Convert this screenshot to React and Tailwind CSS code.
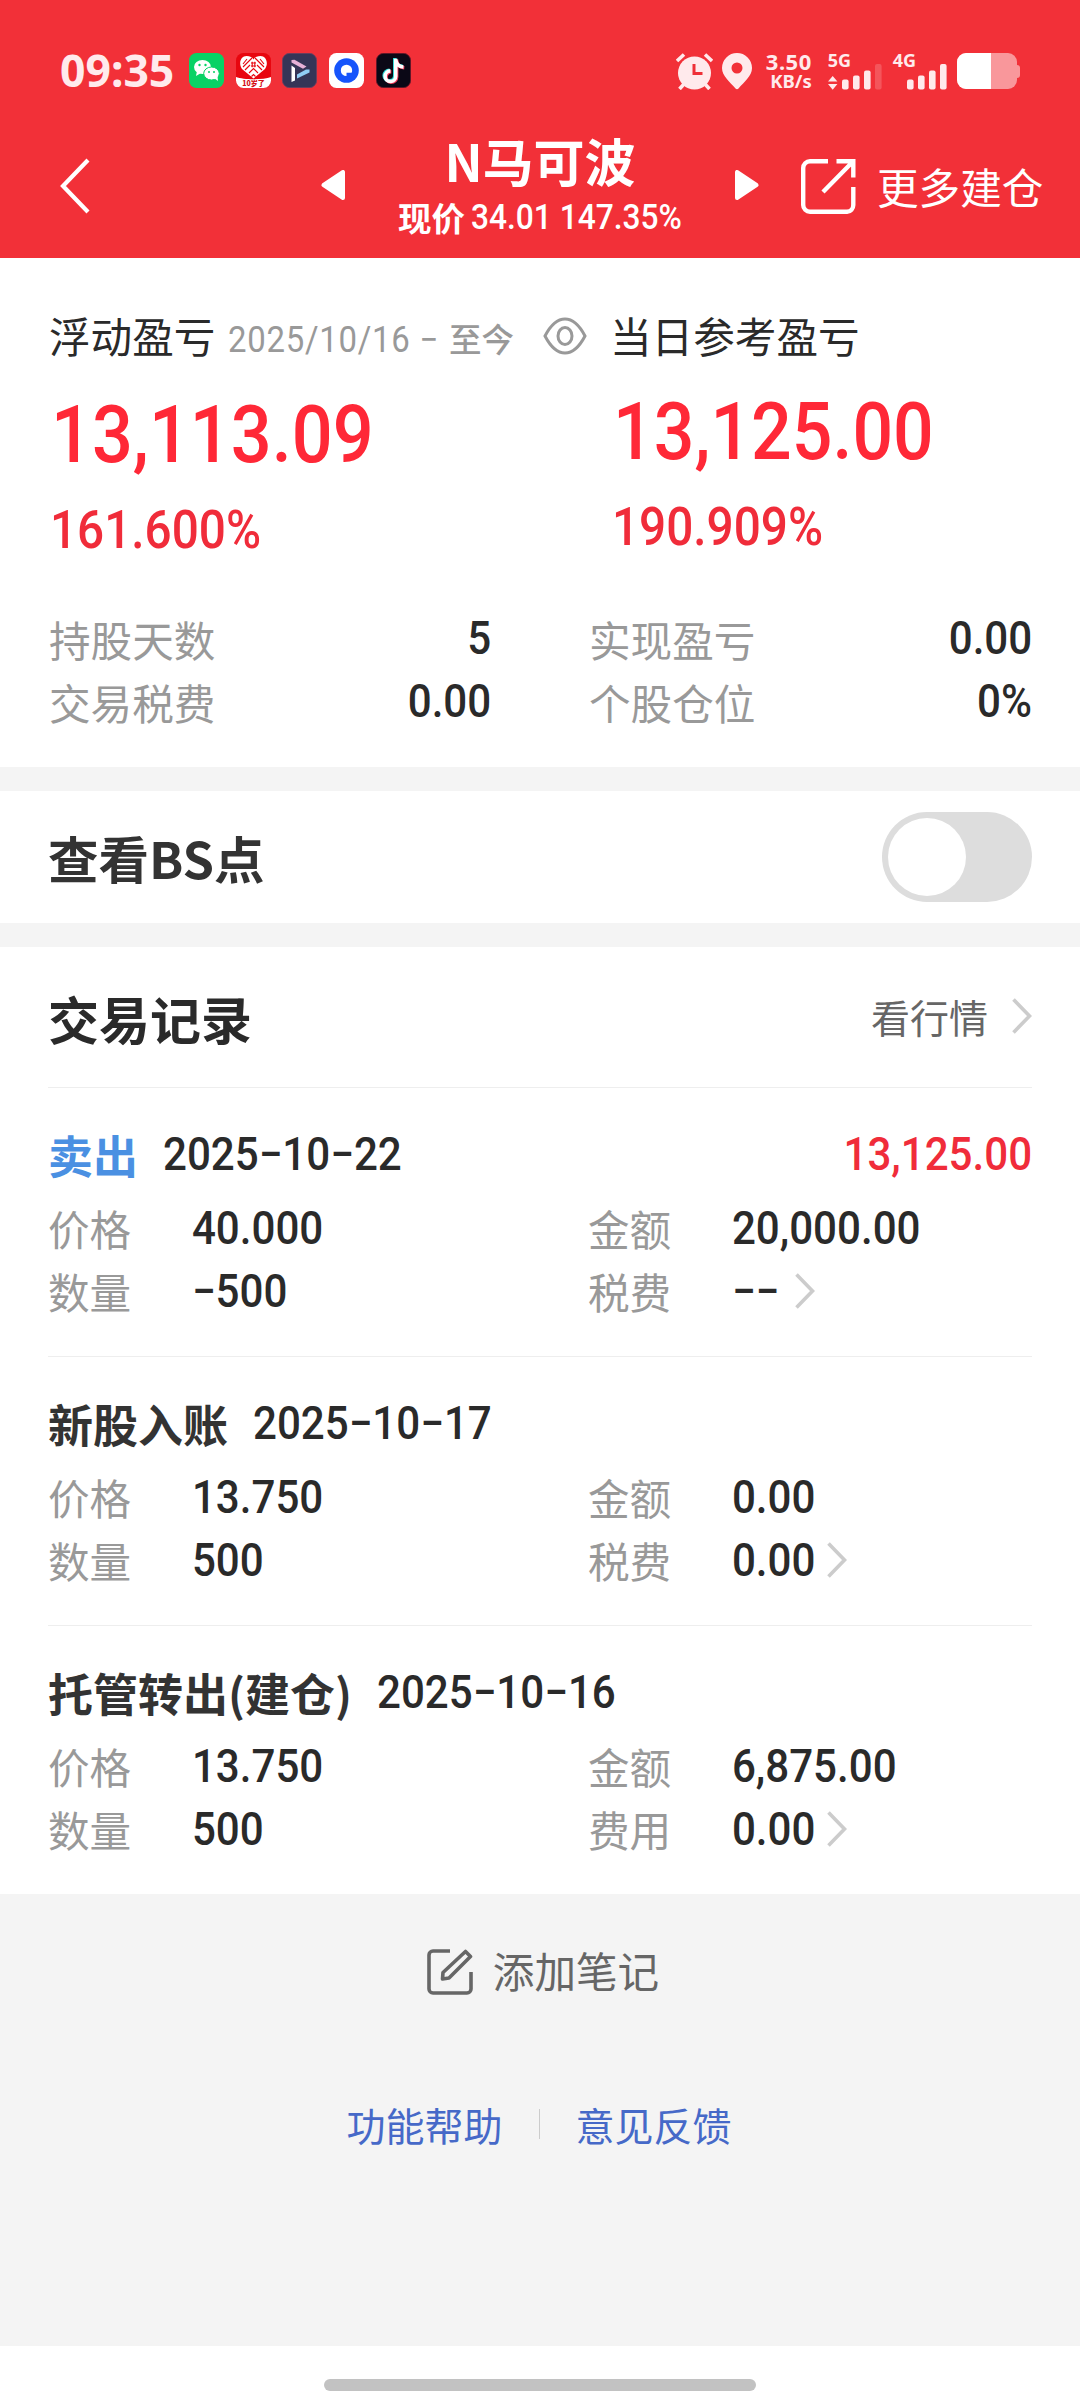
import { useState } from "react";

const summary = [
  { label: "持股天数", value: "5" },
  { label: "实现盈亏", value: "0.00" },
  { label: "交易税费", value: "0.00" },
  { label: "个股仓位", value: "0%" },
];

const records = [
  {
    type: "卖出",
    typeColor: "text-[#4a90e2]",
    date: "2025−10−22",
    profit: "13,125.00",
    price: "40.000",
    amount: "20,000.00",
    count: "−500",
    feeLabel: "税费",
    fee: "−−",
    feeWidth: "w-[64px]",
  },
  {
    type: "新股入账",
    typeColor: "text-[#333333]",
    date: "2025−10−17",
    price: "13.750",
    amount: "0.00",
    count: "500",
    feeLabel: "税费",
    fee: "0.00",
    feeWidth: "w-[96px]",
  },
  {
    type: "托管转出(建仓)",
    typeColor: "text-[#333333]",
    date: "2025−10−16",
    price: "13.750",
    amount: "6,875.00",
    count: "500",
    feeLabel: "费用",
    fee: "0.00",
    feeWidth: "w-[96px]",
  },
];

// condensed figures, used for every amount on the page
const Num = ({ children, className = "", scale = "scale-x-[0.915]" }) => (
  <span
    className={`inline-block shrink-0 whitespace-nowrap font-['Roboto',sans-serif] leading-none ${scale} ${className}`}
  >
    {children}
  </span>
);

const Chevron = () => (
  <svg width="20" height="36" viewBox="0 0 20 36" fill="none">
    <path d="M1.5 1.5L17.5 18L1.5 34.5" stroke="#cccccc" strokeWidth="3.6" />
  </svg>
);

const AppIcons = () => (
  <div className="flex gap-[11.7px]">
    {/* WeChat */}
    <svg width="35" height="35" viewBox="0 0 35 35">
      <rect width="35" height="35" rx="7.5" fill="#08d265" />
      <ellipse cx="13.5" cy="14" rx="8.5" ry="7" fill="#fff" />
      <path d="M8 18l-1 5 5-3z" fill="#fff" />
      <ellipse cx="22.5" cy="20.5" rx="7.8" ry="6.5" fill="#fff" stroke="#08d265" strokeWidth="1" />
      <path d="M25 25l4 3-.5-5z" fill="#fff" />
      <circle cx="10.5" cy="12" r="1.2" fill="#08d265" />
      <circle cx="16.5" cy="12" r="1.2" fill="#08d265" />
      <circle cx="20" cy="19" r="1" fill="#08d265" />
      <circle cx="25" cy="19" r="1" fill="#08d265" />
    </svg>
    {/* Pinduoduo */}
    <svg width="35" height="35" viewBox="0 0 35 35">
      <rect width="35" height="35" rx="7.5" fill="#e8060f" />
      <path d="M17.5 25.5L6 16C2 10 5 3 10.5 3C14 3 16.5 4.5 17.5 6.5C18.5 4.5 21 3 24.5 3C30 3 33 10 29 16Z" fill="#fff" />
      <path
        d="M7 11l4-5M7 14l9-9M9 17l5-5M24 6l4 5M19 5l9 9M21 12l5 5M13 20l4.5-4.5l4.5 4.5M15.5 23.5l2-2l2 2M15 10h5M15 13h5M16.2 8.8v5.5M18.8 8.8v5.5"
        stroke="#e8060f"
        strokeWidth="1.1"
        fill="none"
      />
      <path d="M0 24C8 27 27 27 35 24V27.5A7.5 7.5 0 0 1 27.5 35H7.5A7.5 7.5 0 0 1 0 27.5Z" fill="#fff" />
      <text x="17.5" y="32.8" textAnchor="middle" fontSize="7" fontWeight="900" fill="#d40d14" fontFamily="'Noto Sans CJK SC', sans-serif">
        10岁了
      </text>
    </svg>
    <svg width="35" height="35" viewBox="0 0 35 35">
      <rect x="0.3" y="0.3" width="34.4" height="34.4" rx="7.5" fill="#353557" stroke="#6d4363" strokeWidth="0.8" />
      <path d="M9.5 12.5l3.5 2.5v12.5l-3.5 1.5z" fill="#fff" />
      <path d="M9.5 7l3-.2L24.5 13.5l-3.5 2.3L9.5 9.5z" fill="#e7b2d8" />
      <path d="M27.5 16.5v3L15 25.5v-4L24 16.5z" fill="#90cdf5" />
    </svg>
    {/* Quark */}
    <svg width="35" height="35" viewBox="0 0 35 35">
      <rect width="35" height="35" rx="7.5" fill="#fff" />
      <circle cx="17.5" cy="17.5" r="12.3" fill="#1654fb" />
      <path d="M17.5 11.7A5.7 5.7 0 1 0 17.5 23.1V19.8H22.6A5.7 5.7 0 0 0 17.5 11.7Z" fill="#fff" />
    </svg>
    {/* Douyin */}
    <svg width="35" height="35" viewBox="0 0 35 35">
      <rect x="0.3" y="0.3" width="34.4" height="34.4" rx="7.5" fill="#0b0816" stroke="#6d1a2c" strokeWidth="0.8" />
      <g fill="none" strokeWidth="3.6">
        <path d="M18.8 5V22.5A5.3 5.3 0 1 1 13.5 17.2M18.8 6C19.5 10.5 22.5 13 26.5 13.3" stroke="#25d8d4" />
        <path d="M20.6 6.5V24A5.3 5.3 0 1 1 15.3 18.7M20.6 7.5C21.3 12 24.3 14.5 28.3 14.8" stroke="#f6405f" />
        <path d="M19.7 5.7V23.2A5.3 5.3 0 1 1 14.4 17.9M19.7 6.7C20.4 11.2 23.4 13.7 27.4 14" stroke="#fff" />
      </g>
    </svg>
  </div>
);

const StatusBar = () => (
  <div className="flex h-[114px] items-start pt-[53px] pl-[60px] text-[#ffeaec]">
    <div className="flex h-[35px] w-[129px] items-center">
      <span className="font-['Noto_Sans',sans-serif] text-[44.5px] font-bold leading-none">09:35</span>
    </div>
    <AppIcons />

    <svg className="ml-[265px]" width="37" height="37" viewBox="0 0 37 37">
      <path d="M1 8L8 1.5M36 8L29 1.5M8 31L3.5 36M29 31L33.5 36" stroke="#ffeaec" strokeWidth="3.6" />
      <circle cx="18.5" cy="20" r="16.5" fill="#ffeaec" />
      <path d="M18 11V20.5H26.5" stroke="#ef3038" strokeWidth="3" fill="none" />
    </svg>
    <svg className="ml-[9px]" width="30" height="37" viewBox="0 0 30 37">
      <path
        d="M15 0A15 15 0 0 1 30 15C30 23 22 29 16.5 35.5Q15 37 13.5 35.5C8 29 0 23 0 15A15 15 0 0 1 15 0ZM15 9.5A5.5 5.5 0 1 0 15 20.5A5.5 5.5 0 1 0 15 9.5Z"
        fill="#ffeaec"
        fillRule="evenodd"
      />
    </svg>

    <div className="ml-[7px] flex w-[53px] flex-col items-end font-['Noto_Sans',sans-serif] font-bold">
      <span className="h-[19px] text-[22px] leading-[16px] tracking-[0.5px]">3.50</span>
      <span className="text-[18.5px] leading-[18px]">KB/s</span>
    </div>

    <div className="ml-[16px] h-[37px] w-[54px] font-['Noto_Sans',sans-serif] text-[18px] font-bold">
      <div className="h-[11px] leading-[14px]">5G</div>
      <svg width="54" height="26" viewBox="0 0 54 26" fill="#ffeaec">
        <path d="M0 17.5L4.7 12L9.4 17.5ZM0 20L4.7 25.7L9.4 20Z" />
        <rect x="14" y="15.5" width="6.6" height="10" rx="2" />
        <rect x="25" y="11.5" width="6.6" height="14" rx="2" />
        <rect x="36" y="6.5" width="6.6" height="19" rx="2" />
        <rect x="47" y="0" width="6.6" height="25.5" rx="2" fillOpacity="0.2" />
      </svg>
    </div>

    <div className="ml-[11px] h-[37px] w-[55px] font-['Noto_Sans',sans-serif] text-[18px] font-bold">
      <div className="h-[11px] leading-[14px]">4G</div>
      <svg width="55" height="26" viewBox="0 0 55 26" fill="#ffeaec">
        <rect x="14" y="15.5" width="6.6" height="10" rx="2" />
        <rect x="25" y="11.5" width="6.6" height="14" rx="2" />
        <rect x="36" y="6.5" width="6.6" height="19" rx="2" />
        <rect x="47" y="0" width="6.6" height="25.5" rx="2" />
      </svg>
    </div>

    <div className="ml-[9px] flex items-center">
      <div className="h-[36px] w-[60px] overflow-hidden rounded-[9px] bg-[#f9979b]">
        <div className="h-full w-[34px] bg-white"></div>
      </div>
      <div className="h-[13px] w-[3px] rounded-r-[3px] bg-[#f9979b]"></div>
    </div>
  </div>
);

const NavBar = () => (
  <div className="flex h-[144px] items-center pl-[60px] text-white">
    <svg width="30" height="56" viewBox="0 0 30 56" fill="none">
      <path d="M28 2L3 28L28 54" stroke="#fff" strokeWidth="4.2" />
    </svg>
    <svg className="mb-[2px] ml-[231px]" width="24" height="30" viewBox="0 0 24 30">
      <path d="M22 2V28L2.5 15Z" fill="#fff" stroke="#fff" strokeWidth="4" strokeLinejoin="round" />
    </svg>
    <div className="flex w-[390px] flex-col items-center pt-[6px]">
      <h1 className="text-[51px] font-bold leading-[56px]">N马可波</h1>
      <div className="flex h-[58px] w-[284px] items-center">
        <span className="w-[73px] shrink-0 whitespace-nowrap text-[33.5px] font-bold leading-none">现价</span>
        <Num scale="scale-x-[0.905]" className="origin-left text-[35px] font-medium">
          34.01 147.35%
        </Num>
      </div>
    </div>
    <svg className="mb-[2px]" width="24" height="30" viewBox="0 0 24 30">
      <path d="M2 2V28L21.5 15Z" fill="#fff" stroke="#fff" strokeWidth="4" strokeLinejoin="round" />
    </svg>
    <svg className="ml-[42px]" width="55" height="55" viewBox="0 0 55 55" fill="none" stroke="#fff" strokeWidth="4.4">
      <path d="M27 2.2H9A6.8 6.8 0 0 0 2.2 9V46A6.8 6.8 0 0 0 9 52.8H46A6.8 6.8 0 0 0 52.3 46V28" />
      <path d="M35.5 2.2H52.3V18.5M52 2.5L22 33" />
    </svg>
    <span className="mt-[2px] ml-[21px] whitespace-nowrap text-[41.6px] leading-none">更多建仓</span>
  </div>
);

const Profit = () => (
  <section className="h-[509px] bg-white pt-[56px]">
    <div className="grid grid-cols-[565px_1fr]">
      <div className="pl-[49px]">
        <div className="flex h-[44px] items-center">
          <span className="w-[179px] shrink-0 text-[41.6px] leading-none">浮动盈亏</span>
          <Num className="mt-[8px] w-[221px] origin-left text-[36px] tracking-[0.8px] text-[#999999]">
            2025/10/16 −
          </Num>
          <span className="mt-[4px] shrink-0 whitespace-nowrap text-[32.5px] font-medium leading-none text-[#999999]">
            至今
          </span>
          <svg className="ml-[29px] shrink-0" width="44" height="38" viewBox="0 0 44 38" fill="none" stroke="#999999" strokeWidth="3">
            <path d="M2 19C8 7.5 14.5 2 22 2C29.5 2 36 7.5 42 19C36 30.5 29.5 36 22 36C14.5 36 8 30.5 2 19Z" />
            <ellipse cx="22" cy="19" rx="7" ry="8.5" />
          </svg>
        </div>
        <div className="mt-[34px] flex h-[86px] items-center pl-[2px] text-[#ff2837]">
          <Num scale="scale-x-[0.9]" className="origin-left text-[80px] font-medium">
            13,113.09
          </Num>
        </div>
        <div className="mt-[22px] flex h-[60px] items-center pl-px text-[#f02c3a]">
          <Num scale="scale-x-[0.9]" className="origin-left text-[53px] font-medium">
            161.600%
          </Num>
        </div>
      </div>
      <div className="pl-[45px]">
        <div className="flex h-[44px] items-center text-[41.6px] leading-none">当日参考盈亏</div>
        <div className="mt-[31px] flex h-[86px] items-center pl-[3px] text-[#ff2837]">
          <Num scale="scale-x-[0.895]" className="origin-left text-[80px] font-medium">
            13,125.00
          </Num>
        </div>
        <div className="mt-[22px] flex h-[60px] items-center pl-[2px] text-[#f02c3a]">
          <Num scale="scale-x-[0.9]" className="origin-left text-[53px] font-medium">
            190.909%
          </Num>
        </div>
      </div>
    </div>

    <div className="mt-[48px] grid grid-cols-[443px_444px] gap-x-[97px] pl-[48px]">
      {summary.map((item) => (
        <div key={item.label} className="flex h-[63px] items-center justify-between">
          <span className="pl-px text-[41.6px] leading-none text-[#999999]">{item.label}</span>
          <Num className="mb-[3px] origin-right text-[46px] font-medium">{item.value}</Num>
        </div>
      ))}
    </div>
  </section>
);

const Field = ({ label, children }) => (
  <div className="flex h-[63px] items-center">
    <span className="mt-[2px] w-[143px] text-[41.6px] leading-none text-[#999999]">{label}</span>
    {children}
  </div>
);

const Record = ({ item }) => (
  <div className="mx-[48px] h-[269px] border-t border-[#eeeeee] pt-[28px]">
    <div className="flex h-[75px] items-center justify-between">
      <div className="flex items-center gap-[25px]">
        <span className={`mt-[2px] text-[45px] font-bold leading-none ${item.typeColor}`}>{item.type}</span>
        <Num className="origin-left text-[46px] font-medium">{item.date}</Num>
      </div>
      {item.profit && <Num className="origin-right text-[46px] font-medium text-[#f02c3a]">{item.profit}</Num>}
    </div>
    <div className="mt-[5px] grid grid-cols-[540px_1fr]">
      <Field label="价格">
        <Num className="origin-left pl-px text-[46px] font-medium">{item.price}</Num>
      </Field>
      <Field label="金额">
        <Num className="origin-left pl-px text-[46px] font-medium">{item.amount}</Num>
      </Field>
      <Field label="数量">
        <Num className="origin-left pl-px text-[46px] font-medium">{item.count}</Num>
      </Field>
      <Field label={item.feeLabel}>
        <Num className={`origin-left pl-px text-[46px] font-medium ${item.feeWidth}`}>{item.fee}</Num>
        <Chevron />
      </Field>
    </div>
  </div>
);

const App = () => {
  const [showPoints, setShowPoints] = useState(false);

  return (
    <div className="flex h-[2400px] w-[1080px] flex-col overflow-hidden bg-[#f4f4f4] font-['Noto_Sans_CJK_SC',sans-serif] text-[#2a2a2a]">
      <header className="h-[258px] bg-[#f23038]">
        <StatusBar />
        <NavBar />
      </header>

      <Profit />

      <section className="mt-[24px] flex h-[132px] items-center justify-between bg-white px-[48px]">
        <h2 className="text-[50.5px] font-bold leading-none text-[#333333]">查看BS点</h2>
        <button
          onClick={() => setShowPoints(!showPoints)}
          className={`flex h-[90px] w-[150px] items-center rounded-full px-[6px] ${
            showPoints ? "justify-end bg-[#f23038]" : "justify-start bg-[#dddddd]"
          }`}
        >
          <span className="h-[78px] w-[78px] rounded-full bg-white"></span>
        </button>
      </section>

      <section className="mt-[24px] bg-white">
        <div className="flex h-[140px] items-center justify-between px-[48px]">
          <h2 className="mt-[2px] text-[51px] font-bold leading-none">交易记录</h2>
          <div className="mb-[2px] flex items-center gap-[24px]">
            <span className="text-[39px] leading-none text-[#666666]">看行情</span>
            <Chevron />
          </div>
        </div>
        {records.map((item) => (
          <Record key={item.date} item={item} />
        ))}
      </section>

      {/* Footer actions */}
      <div className="mt-[48px] flex h-[60px] items-center justify-center gap-[20px] pl-[6px] text-[#666666]">
        <svg width="46" height="46" viewBox="0 0 46 46" fill="none" stroke="#666666" strokeWidth="3.6">
          <path d="M23 2H6A4 4 0 0 0 2 6V40A4 4 0 0 0 6 44H40A4 4 0 0 0 44 40V23" />
          <path d="M38.5 2.5L43.5 7.5L22 29L15.5 30L16 23.5Z" strokeLinejoin="round" />
        </svg>
        <span className="mb-[2px] text-[41.6px] leading-none">添加笔记</span>
      </div>

      <div className="mt-[92px] flex h-[60px] items-center justify-center pr-[2px] text-[39px] leading-none text-[#4669c8]">
        <span>功能帮助</span>
        <span className="mx-[36px] h-[30px] w-px bg-[#cccccc]"></span>
        <span>意见反馈</span>
      </div>

      <div className="mt-auto flex h-[54px] justify-center bg-white pt-[33px]">
        <div className="h-[12px] w-[432px] rounded-full bg-[#c2c2c2]"></div>
      </div>
    </div>
  );
};

export default App;
